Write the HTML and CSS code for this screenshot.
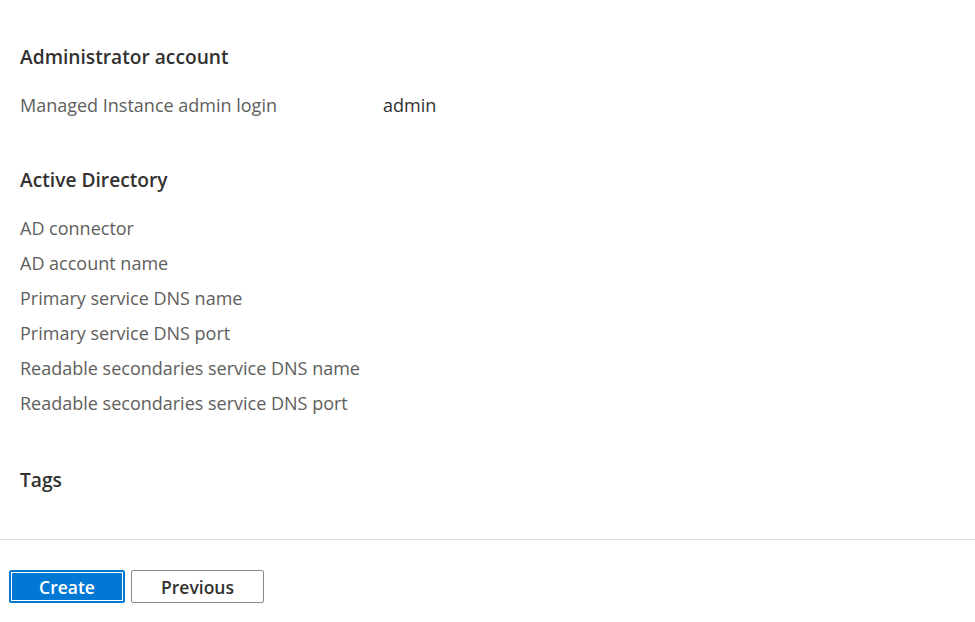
FILE: index.html
```html
<!DOCTYPE html>
<html>
    <head>
        <title>Review + create</title>
        <link rel="stylesheet" href="styles.css">
    </head>
    <body>
        <main class="summary">
            <section class="group">
                <h2 class="group_title">Administrator account</h2>
                <div class="row">
                    <div class="label">Managed Instance admin login</div>
                    <div class="value">admin</div>
                </div>
            </section>

            <section class="group">
                <h2 class="group_title">Active Directory</h2>
                <div class="row"><div class="label">AD connector</div></div>
                <div class="row"><div class="label">AD account name</div></div>
                <div class="row"><div class="label">Primary service DNS name</div></div>
                <div class="row"><div class="label">Primary service DNS port</div></div>
                <div class="row"><div class="label">Readable secondaries service DNS name</div></div>
                <div class="row"><div class="label">Readable secondaries service DNS port</div></div>
            </section>

            <section class="group tags">
                <h2 class="group_title">Tags</h2>
            </section>
        </main>

        <footer class="actions">
            <button class="btn primary">Create</button>
            <button class="btn">Previous</button>
        </footer>
    </body>
</html>
```

FILE: styles.css
```css
* {
    box-sizing: border-box;
}

body {
    margin: 0;
    font-family: "Open Sans", "Noto Sans", sans-serif;
    color: #323130;
    background: #fff;
}

.summary {
    padding: 43px 20px 0 20px;
}

.group + .group {
    margin-top: 43px;
}

.group_title {
    margin: 0 0 17px 0;
    font-size: 19.2px;
    font-weight: 600;
    line-height: 28px;
    color: #323130;
}

.row {
    display: grid;
    grid-template-columns: 363px auto;
    height: 35px;
    line-height: 35px;
    font-size: 18px;
}

.label {
    color: #605e5c;
}

.value {
    color: #323130;
}

.tags {
    margin-top: 45px !important;
}

.actions {
    margin-top: 45px;
    border-top: 1px solid #e1dfdd;
    padding: 30px 9px 0 9px;
    display: flex;
    gap: 6px;
}

.btn {
    height: 33px;
    min-width: 116px;
    padding: 0 20px;
    font-family: inherit;
    font-size: 17.5px;
    font-weight: 600;
    color: #323130;
    background: #fff;
    border: 1px solid #8a8886;
    border-radius: 2px;
}

.btn:not(.primary) {
    width: 133px;
}

.btn.primary {
    color: #fff;
    background: #0078d4;
    border-color: #0078d4;
    box-shadow: inset 0 0 0 1px #0078d4, inset 0 0 0 2px #fff;
}
```
